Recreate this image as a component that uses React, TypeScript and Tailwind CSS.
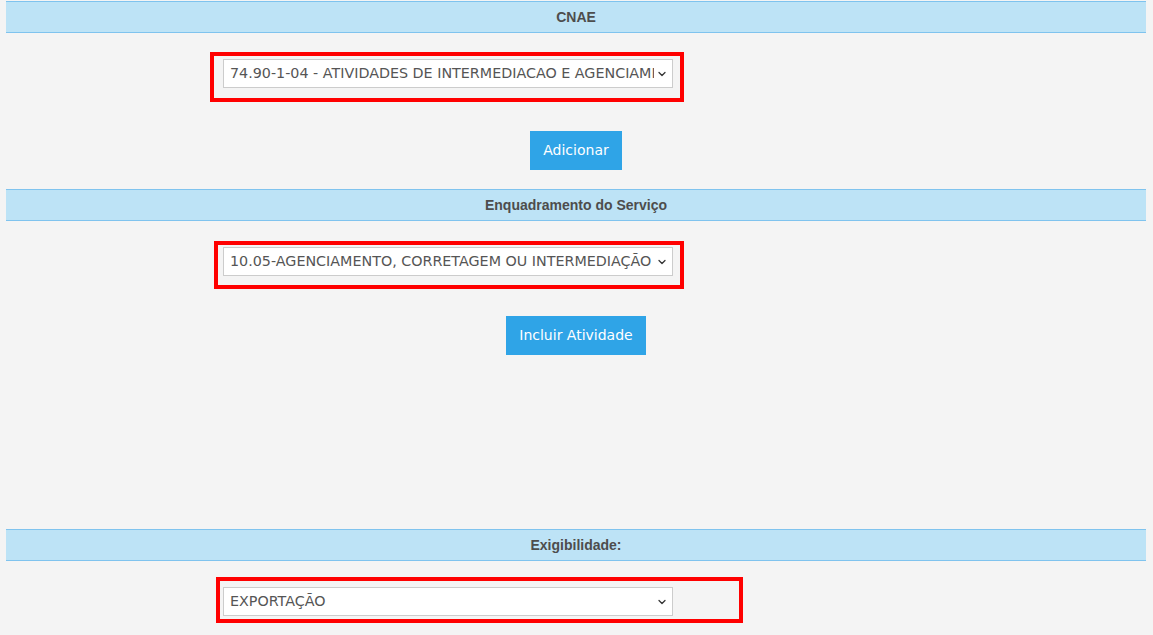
import { ChevronDown } from "lucide-react";

const FONT = "font-['DejaVu_Sans',Verdana,sans-serif]";

function SectionHeader({ title }: { title: string }) {
	return (
		<div className="h-[32px] bg-[#bde3f6] border-y border-[#7fc3ee] flex items-center justify-center">
			<span className="font-['Liberation_Sans',Arial,sans-serif] font-bold text-[14px] text-[#4d4d4d]">{title}</span>
		</div>
	);
}

function FakeSelect({ value }: { value: string }) {
	return (
		<div className={`w-[450px] h-[29px] bg-white border border-[#cccccc] flex items-center pl-[6px] pr-[4px] ${FONT}`}>
			<span className="flex-1 overflow-hidden whitespace-nowrap text-[14.3px] text-[#555555]">{value}</span>
			<ChevronDown size={12} strokeWidth={2.5} className="text-[#333] ml-[2px] shrink-0" />
		</div>
	);
}

function BlueButton({ label, width }: { label: string; width: string }) {
	return (
		<div className="flex justify-center">
			<button className={`${width} h-[39px] bg-[#2fa4e7] text-white text-[14px] ${FONT}`}>{label}</button>
		</div>
	);
}

export default function App() {
	return (
		<div className="w-[1153px] h-[635px] overflow-hidden bg-[#f4f4f4] pt-[1px] px-[6px]">
			<div className="w-[1140px]">
				<SectionHeader title="CNAE" />

				<div className="mt-[19px] ml-[204px] w-[474px] h-[50px] border-4 border-[#ff0000] pl-[9px] pt-[3px]">
					<FakeSelect value="74.90-1-04 - ATIVIDADES DE INTERMEDIACAO E AGENCIAMENTO DE SERVICOS E NEGOCIOS EM GERAL" />
				</div>

				<div className="mt-[29px]">
					<BlueButton label="Adicionar" width="w-[92px]" />
				</div>

				<div className="mt-[19px]">
					<SectionHeader title="Enquadramento do Serviço" />
				</div>

				<div className="mt-[20px] ml-[208px] w-[470px] h-[48px] border-4 border-[#ff0000] pl-[5px] pt-[2px]">
					<FakeSelect value="10.05-AGENCIAMENTO, CORRETAGEM OU INTERMEDIAÇÃO" />
				</div>

				<div className="mt-[27px]">
					<BlueButton label="Incluir Atividade" width="w-[140px]" />
				</div>

				<div className="mt-[174px]">
					<SectionHeader title="Exigibilidade:" />
				</div>

				<div className="mt-[16px] ml-[210px] w-[527px] h-[46px] border-4 border-[#ff0000] pl-[3px] pt-[6px]">
					<FakeSelect value="EXPORTAÇÃO" />
				</div>
			</div>
		</div>
	);
}
